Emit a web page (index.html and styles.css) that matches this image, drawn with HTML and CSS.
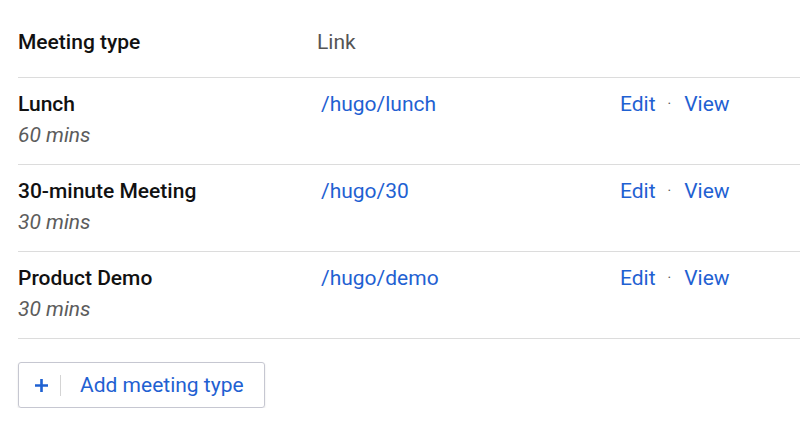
FILE: index.html
```html
<!DOCTYPE html>
<html>
<head>
<meta charset="utf-8">
<link rel="stylesheet" href="styles.css">
</head>
<body>
<div class="page">
  <div class="row head">
    <div class="name">Meeting type</div>
    <div class="col-link">Link</div>
    <div></div>
  </div>
  <div class="row">
    <div><div class="name">Lunch</div><div class="dur">60 mins</div></div>
    <div class="link">/hugo/lunch</div>
    <div class="actions"><span class="link">Edit</span><span class="dot">·</span><span class="link">View</span></div>
  </div>
  <div class="row">
    <div><div class="name">30-minute Meeting</div><div class="dur">30 mins</div></div>
    <div class="link">/hugo/30</div>
    <div class="actions"><span class="link">Edit</span><span class="dot">·</span><span class="link">View</span></div>
  </div>
  <div class="row">
    <div><div class="name">Product Demo</div><div class="dur">30 mins</div></div>
    <div class="link">/hugo/demo</div>
    <div class="actions"><span class="link">Edit</span><span class="dot">·</span><span class="link">View</span></div>
  </div>
  <div class="btn">
    <span class="plus"><svg width="15" height="15" viewBox="0 0 15 15"><path d="M7.5 1v13M1 7.5h13" stroke="#1f61d2" stroke-width="2.6"/></svg></span>
    <span class="sep"></span>
    <span class="btn-text">Add meeting type</span>
  </div>
</div>
</body>
</html>
```
FILE: styles.css
```css
html, body {
  margin: 0;
  padding: 0;
  background: #fff;
}
body {
  font-family: Roboto, "Noto Sans", Arial, sans-serif;
  font-size: 21px;
  line-height: 31px;
  color: #1a1a1a;
}
.page {
  padding-left: 18px;
}
.row {
  display: grid;
  grid-template-columns: 303px 299px 1fr;
  padding: 11px 0 13px;
  border-bottom: 1px solid #dcdcdc;
}
.row.head {
  padding-top: 27px;
  padding-bottom: 19px;
}
.name {
  font-weight: 500;
  color: #111;
}
.col-link {
  color: #555;
  margin-left: -4px;
}
.dur {
  font-style: italic;
  color: #5c5c5c;
}
.link {
  color: #1f61d2;
}
.actions {
  display: flex;
  align-items: flex-start;
}
.dot {
  color: #555;
  font-size: 14px;
  margin: 0 13px 0 12px;
}
.btn {
  margin-top: 23px;
  width: 245px;
  height: 44px;
  border: 1px solid #c6c7d1;
  border-radius: 3px;
  box-shadow: 0 1px 2px rgba(0,0,0,0.12);
  display: flex;
  align-items: center;
  box-sizing: content-box;
}
.plus {
  display: flex;
  margin-left: 15px;
}
.sep {
  width: 1px;
  height: 21px;
  background: #d4d4d4;
  margin-left: 11px;
}
.btn-text {
  color: #1f61d2;
  margin-left: 19px;
}
```
